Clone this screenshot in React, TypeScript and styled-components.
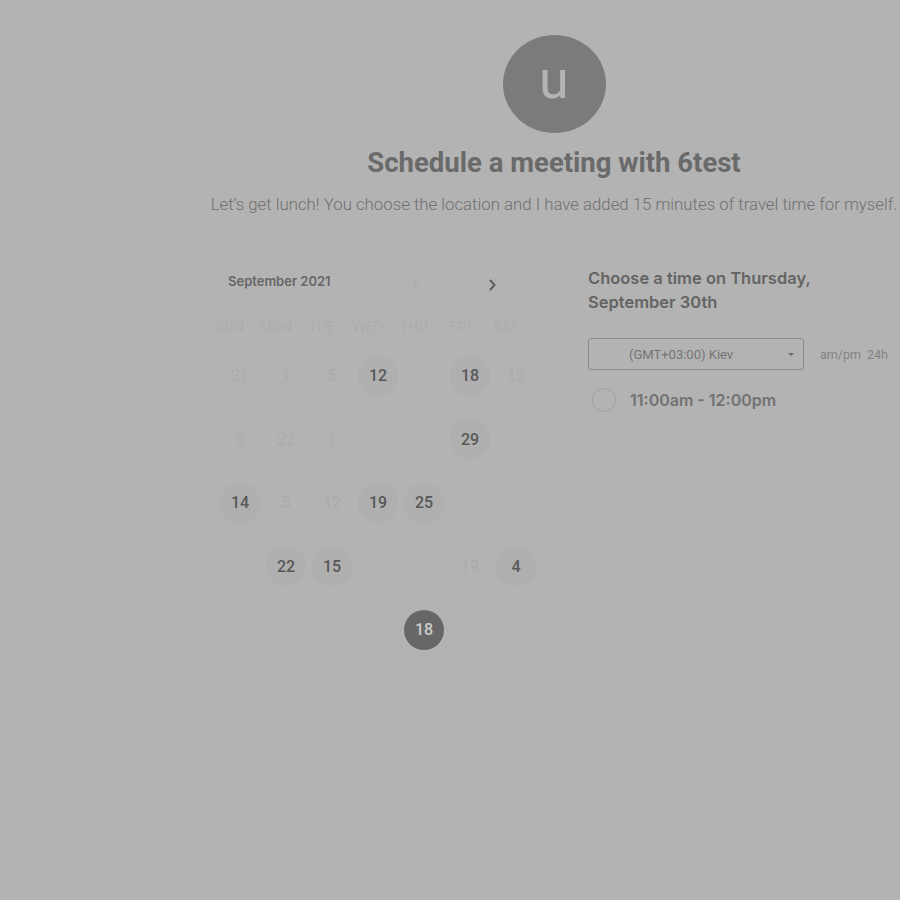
import React from "react";
import styled, { createGlobalStyle } from "styled-components";

const Global = createGlobalStyle`
  html, body { margin: 0; padding: 0; background: #b3b3b3; overflow: hidden; }
  body { width: 900px; height: 900px; }
`;

const Page = styled.div`
  width: 712px;
  margin-left: 198px;
  padding-top: 35px;
  display: flex;
  flex-direction: column;
  align-items: center;
`;

const Avatar = styled.div`
  width: 103px;
  height: 98px;
  border-radius: 50%;
  background: #7b7b7b;
  color: #b4b4b4;
  display: flex;
  align-items: center;
  justify-content: center;
  font-family: Roboto, sans-serif;
  font-size: 54px;
  line-height: 1;
  padding-bottom: 8px;
  box-sizing: border-box;
`;

const Title = styled.h1`
  margin: 14px 0 0;
  font-family: Roboto, sans-serif;
  font-weight: 700;
  font-size: 27.5px;
  line-height: 32px;
  color: #6a6a6a;
`;

const Subtitle = styled.p`
  margin: 15px 0 0;
  font-family: Roboto, sans-serif;
  font-weight: 300;
  font-size: 16.8px;
  line-height: 20px;
  color: #707070;
  white-space: nowrap;
`;

const Columns = styled.div`
  align-self: stretch;
  display: flex;
  gap: 33px;
  margin-top: 37px;
  align-items: flex-start;
`;

const CalendarBox = styled.div`
  width: 340px;
  height: 406px;
  box-sizing: border-box;
  border: 1px solid #afafaf;
  padding: 17px 0 0 0;
`;

const CalHeader = styled.div`
  display: flex;
  align-items: center;
  height: 24px;
  padding-left: 29px;
`;

const MonthLabel = styled.div`
  flex-shrink: 0;
  font-family: Inter, sans-serif;
  font-weight: 600;
  font-size: 13px;
  color: #666;
  width: 180px;
`;

const Chevron = styled.div<{ $faint?: boolean }>`
  flex-shrink: 0;
  width: 16px;
  height: 16px;
  margin-top: 8px;
  margin-right: 60px;
  display: flex;
  align-items: center;
  justify-content: center;
  color: ${(p) => (p.$faint ? "#aaaaaa" : "#5e5e5e")};
  &:last-child { margin-right: 0; }
`;

const DayNameRow = styled.div`
  display: grid;
  grid-template-columns: repeat(7, 46px);
  padding-left: 8px;
  margin-top: 26px;
`;

const DayName = styled.div`
  text-align: center;
  font-family: Roboto, sans-serif;
  font-weight: 300;
  font-size: 14px;
  color: #aaaaaa;
  letter-spacing: 0.3px;
`;

const Grid = styled.div`
  display: grid;
  grid-template-columns: repeat(7, 46px);
  grid-auto-rows: 63.5px;
  padding-left: 18px;
  margin-top: 9px;
`;

const Cell = styled.div`
  display: flex;
  align-items: center;
  justify-content: center;
`;

const Day = styled.div<{ $kind: "faint" | "open" | "selected" | "empty" }>`
  width: 40px;
  height: 40px;
  border-radius: 50%;
  display: flex;
  align-items: center;
  justify-content: center;
  font-family: Roboto, sans-serif;
  font-size: 16px;
  font-weight: ${(p) => (p.$kind === "faint" ? 400 : 500)};
  color: ${(p) =>
    p.$kind === "faint" ? "#ababab" : p.$kind === "selected" ? "#cccccc" : "#585858"};
  background: ${(p) =>
    p.$kind === "open" ? "#afafaf" : p.$kind === "selected" ? "#676767" : "transparent"};
`;

const TimePanel = styled.div`
  width: 339px;
  flex-shrink: 0;
  box-sizing: border-box;
  border: 1px solid #afafaf;
  border-right: none;
  height: 175px;
`;

const TimeHeader = styled.div`
  padding: 14px 0 17px 16px;
  border-bottom: 1px solid #afafaf;
  font-family: Inter, sans-serif;
  font-weight: 600;
  font-size: 16.5px;
  line-height: 24px;
  color: #646464;
`;

const ControlsRow = styled.div`
  display: flex;
  align-items: center;
  padding: 6px 0 0 16px;
  gap: 16px;
`;

const Select = styled.div`
  width: 216px;
  height: 32px;
  box-sizing: border-box;
  border: 1px solid #8a8a8a;
  border-radius: 3px;
  display: flex;
  align-items: center;
  padding-left: 40px;
  padding-right: 9px;
  font-family: Roboto, sans-serif;
  font-size: 13px;
  color: #747474;
`;

const SelectText = styled.span`
  flex: 1;
`;

const Caret = styled.span`
  width: 0;
  height: 0;
  border-left: 3.5px solid transparent;
  border-right: 3.5px solid transparent;
  border-top: 3.5px solid #6a6a6a;
`;

const Formats = styled.div`
  font-family: Roboto, sans-serif;
  font-size: 12.5px;
  color: #838383;
  word-spacing: 3px;
`;

const Slot = styled.div`
  display: flex;
  align-items: center;
  padding: 18px 0 0 20px;
  gap: 14px;
`;

const Radio = styled.div`
  width: 24px;
  height: 24px;
  border-radius: 50%;
  border: 1px solid #a2a2a2;
  box-sizing: border-box;
`;

const SlotText = styled.div`
  font-family: Inter, sans-serif;
  font-weight: 600;
  font-size: 16px;
  color: #727272;
`;

type K = "faint" | "open" | "selected" | "empty";
const rows: [string, K][][] = [
  [["21", "faint"], ["1", "faint"], ["5", "faint"], ["12", "open"], ["", "empty"], ["18", "open"], ["12", "faint"]],
  [["5", "faint"], ["22", "faint"], ["1", "faint"], ["", "empty"], ["-", "faint"], ["29", "open"], ["-", "faint"]],
  [["14", "open"], ["5", "faint"], ["12", "faint"], ["19", "open"], ["25", "open"], ["", "empty"], ["-", "faint"]],
  [["", "empty"], ["22", "open"], ["15", "open"], ["", "empty"], ["", "empty"], ["19", "faint"], ["4", "open"]],
  [["", "empty"], ["", "empty"], ["", "empty"], ["", "empty"], ["18", "selected"], ["", "empty"], ["", "empty"]],
];

const names = ["SUN", "MON", "TUE", "WED", "THU", "FRI", "SAT"];

export default function App() {
  return (
    <>
      <Global />
      <Page>
        <Avatar>u</Avatar>
        <Title>Schedule a meeting with 6test</Title>
        <Subtitle>
          Let’s get lunch! You choose the location and I have added 15 minutes of travel time for myself.
        </Subtitle>
        <Columns>
          <CalendarBox>
            <CalHeader>
              <MonthLabel>September 2021</MonthLabel>
              <Chevron $faint>
                <svg width="10" height="14" viewBox="0 0 10 14">
                  <path d="M7 2 L2.5 7 L7 12" fill="none" stroke="currentColor" strokeWidth="1.2" />
                </svg>
              </Chevron>
              <Chevron>
                <svg width="10" height="14" viewBox="0 0 10 14">
                  <path d="M3 2 L7.5 7 L3 12" fill="none" stroke="currentColor" strokeWidth="2" />
                </svg>
              </Chevron>
            </CalHeader>
            <DayNameRow>
              {names.map((n) => (
                <DayName key={n}>{n}</DayName>
              ))}
            </DayNameRow>
            <Grid>
              {rows.flat().map(([t, k], i) => (
                <Cell key={i}>
                  <Day $kind={k}>{t}</Day>
                </Cell>
              ))}
            </Grid>
          </CalendarBox>
          <TimePanel>
            <TimeHeader>
              Choose a time on Thursday,
              <br />
              September 30th
            </TimeHeader>
            <ControlsRow>
              <Select>
                <SelectText>(GMT+03:00) Kiev</SelectText>
                <Caret />
              </Select>
              <Formats>am/pm 24h</Formats>
            </ControlsRow>
            <Slot>
              <Radio />
              <SlotText>11:00am - 12:00pm</SlotText>
            </Slot>
          </TimePanel>
        </Columns>
      </Page>
    </>
  );
}
